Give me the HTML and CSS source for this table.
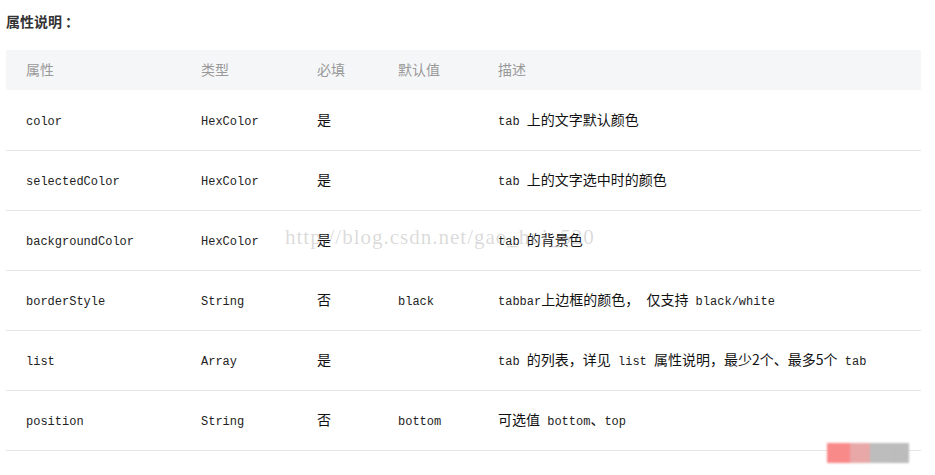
FILE: index.html
```html
<!DOCTYPE html>
<html lang="zh">
<head>
<meta charset="utf-8">
<link rel="stylesheet" href="styles.css">
</head>
<body>
<div class="page">
  <h3 class="title">属性说明<span class="colon">：</span></h3>
  <table class="props">
    <thead>
      <tr>
        <th class="c1">属性</th>
        <th class="c2">类型</th>
        <th class="c3">必填</th>
        <th class="c4">默认值</th>
        <th class="c5">描述</th>
      </tr>
    </thead>
    <tbody>
      <tr><td><code>color</code></td><td><code>HexColor</code></td><td>是</td><td></td><td><code>tab </code>上的文字默认颜色</td></tr>
      <tr><td><code>selectedColor</code></td><td><code>HexColor</code></td><td>是</td><td></td><td><code>tab </code>上的文字选中时的颜色</td></tr>
      <tr><td><code>backgroundColor</code></td><td><code>HexColor</code></td><td>是</td><td></td><td><code>tab </code>的背景色</td></tr>
      <tr><td><code>borderStyle</code></td><td><code>String</code></td><td>否</td><td><code>black</code></td><td><code>tabbar</code>上边框的颜色，<code> </code>仅支持<code> black/white</code></td></tr>
      <tr><td><code>list</code></td><td><code>Array</code></td><td>是</td><td></td><td><code>tab </code>的列表，详见<code> list </code>属性说明，最少2个、最多5个<code> tab</code></td></tr>
      <tr><td><code>position</code></td><td><code>String</code></td><td>否</td><td><code>bottom</code></td><td>可选值<code> bottom</code>、<code>top</code></td></tr>
    </tbody>
  </table>
  <div class="watermark">http://blog.csdn.net/gao_hui_520</div>
  <div class="badge">
    <span class="b1"></span><span class="b2"></span><span class="b3"></span><span class="b4"></span>
  </div>
</div>
</body>
</html>
```
FILE: styles.css
```css
html, body {
  margin: 0;
  padding: 0;
  background: #ffffff;
}
body {
  font-family: "Noto Sans CJK SC", "Noto Sans", sans-serif;
  font-size: 14px;
  color: #222;
}
.page {
  position: relative;
  width: 935px;
  height: 475px;
  padding: 11px 14px 0 6px;
  box-sizing: border-box;
}
.title {
  margin: 0 0 19px 0;
  font-size: 14px;
  line-height: 20px;
  font-weight: bold;
  color: #333;
}
.colon {
  display: inline-block;
  padding-left: 3px;
}
.props {
  width: 915px;
  border-collapse: collapse;
  table-layout: fixed;
}
.props th {
  background: #f5f6f8;
  color: #999;
  font-weight: normal;
  text-align: left;
  height: 38px;
  padding: 0 0 2px 20px;
  font-size: 14px;
  border-bottom: 1px solid #ffffff;
}
.props td {
  height: 56px;
  padding: 0 0 3px 20px;
  border-bottom: 1px solid #e6e6e6;
  color: #111;
  white-space: nowrap;
}
.c1 { width: 155px; }
.c2 { width: 96px; }
.c3 { width: 61px; }
.c4 { width: 80px; }
code {
  font-family: "Liberation Mono", "DejaVu Sans Mono", monospace;
  font-size: 12px;
  color: #222;
  white-space: pre;
}
.watermark {
  position: absolute;
  left: 285px;
  top: 225px;
  font-family: "Liberation Serif", serif;
  font-size: 21px;
  color: rgba(150, 150, 150, 0.35);
  letter-spacing: 1px;
  pointer-events: none;
}
.badge {
  position: absolute;
  left: 827px;
  top: 443px;
  display: flex;
  height: 20px;
  filter: blur(1px);
}
.badge span { display: block; height: 20px; }
.b1 { width: 23px; background: #f98a8a; }
.b2 { width: 20px; background: #e8a8a8; }
.b3 { width: 20px; background: #bdbdbd; }
.b4 { width: 19px; background: #bcbcbc; }
```
